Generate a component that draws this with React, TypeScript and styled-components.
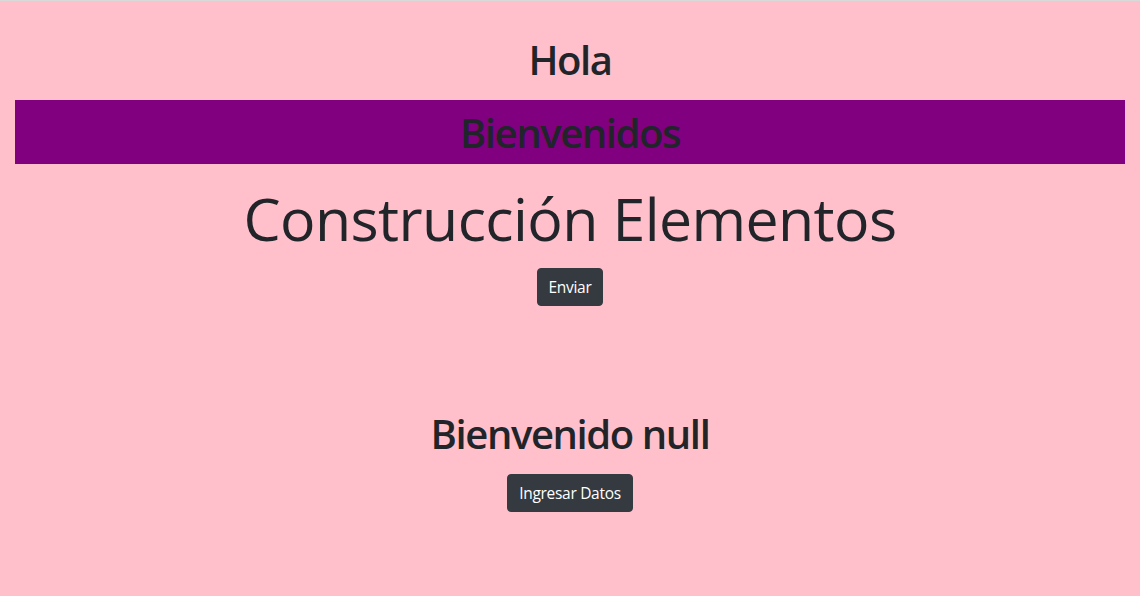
import React from "react";
import styled, { createGlobalStyle } from "styled-components";

const GlobalStyle = createGlobalStyle`
  html, body {
    margin: 0;
    padding: 0;
    background: #ffc0cb;
  }
  body {
    font-family: "Open Sans", "Noto Sans", sans-serif;
    color: #212529;
    border-top: 1px solid #d9d9d9;
  }
  * { box-sizing: border-box; }
`;

const Page = styled.main`
  display: flex;
  flex-direction: column;
  align-items: stretch;
  padding: 35px 15px 40px;
  text-align: center;
`;

const Heading = styled.h1<{ $size: number; $lh: number; $mt?: number; $weight?: number; $ls?: number }>`
  margin: ${(p) => p.$mt ?? 0}px 0 0;
  font-size: ${(p) => p.$size}px;
  line-height: ${(p) => p.$lh}px;
  font-weight: ${(p) => p.$weight ?? 600};
  letter-spacing: ${(p) => p.$ls ?? -1.4}px;
  color: #212529;
`;

const Band = styled.div`
  background: #800080;
  height: 64px;
  margin-top: 16px;
`;

const ButtonRow = styled.div<{ $mt: number }>`
  display: flex;
  justify-content: center;
  margin-top: ${(p) => p.$mt}px;
`;

const Button = styled.button`
  font-family: "Open Sans", "Noto Sans", sans-serif;
  background: #343a40;
  color: #fff;
  border: 1px solid #343a40;
  border-radius: 4px;
  padding: 0 11px;
  height: 38px;
  font-size: 15.5px;
  line-height: 36px;
  letter-spacing: -0.3px;
  cursor: pointer;
`;

export default function App() {
  return (
    <>
      <GlobalStyle />
      <Page>
        <Heading $size={40} $lh={48}>Hola</Heading>
        <Band>
          <Heading as="h2" $size={40} $lh={66}>Bienvenidos</Heading>
        </Band>
        <Heading $size={59} $lh={70} $mt={19} $weight={400} $ls={-0.6}>Construcción Elementos</Heading>
        <ButtonRow $mt={15}>
          <Button>Enviar</Button>
        </ButtonRow>
        <Heading as="h2" $size={40} $lh={48} $mt={104}>Bienvenido null</Heading>
        <ButtonRow $mt={16}>
          <Button>Ingresar Datos</Button>
        </ButtonRow>
      </Page>
    </>
  );
}
